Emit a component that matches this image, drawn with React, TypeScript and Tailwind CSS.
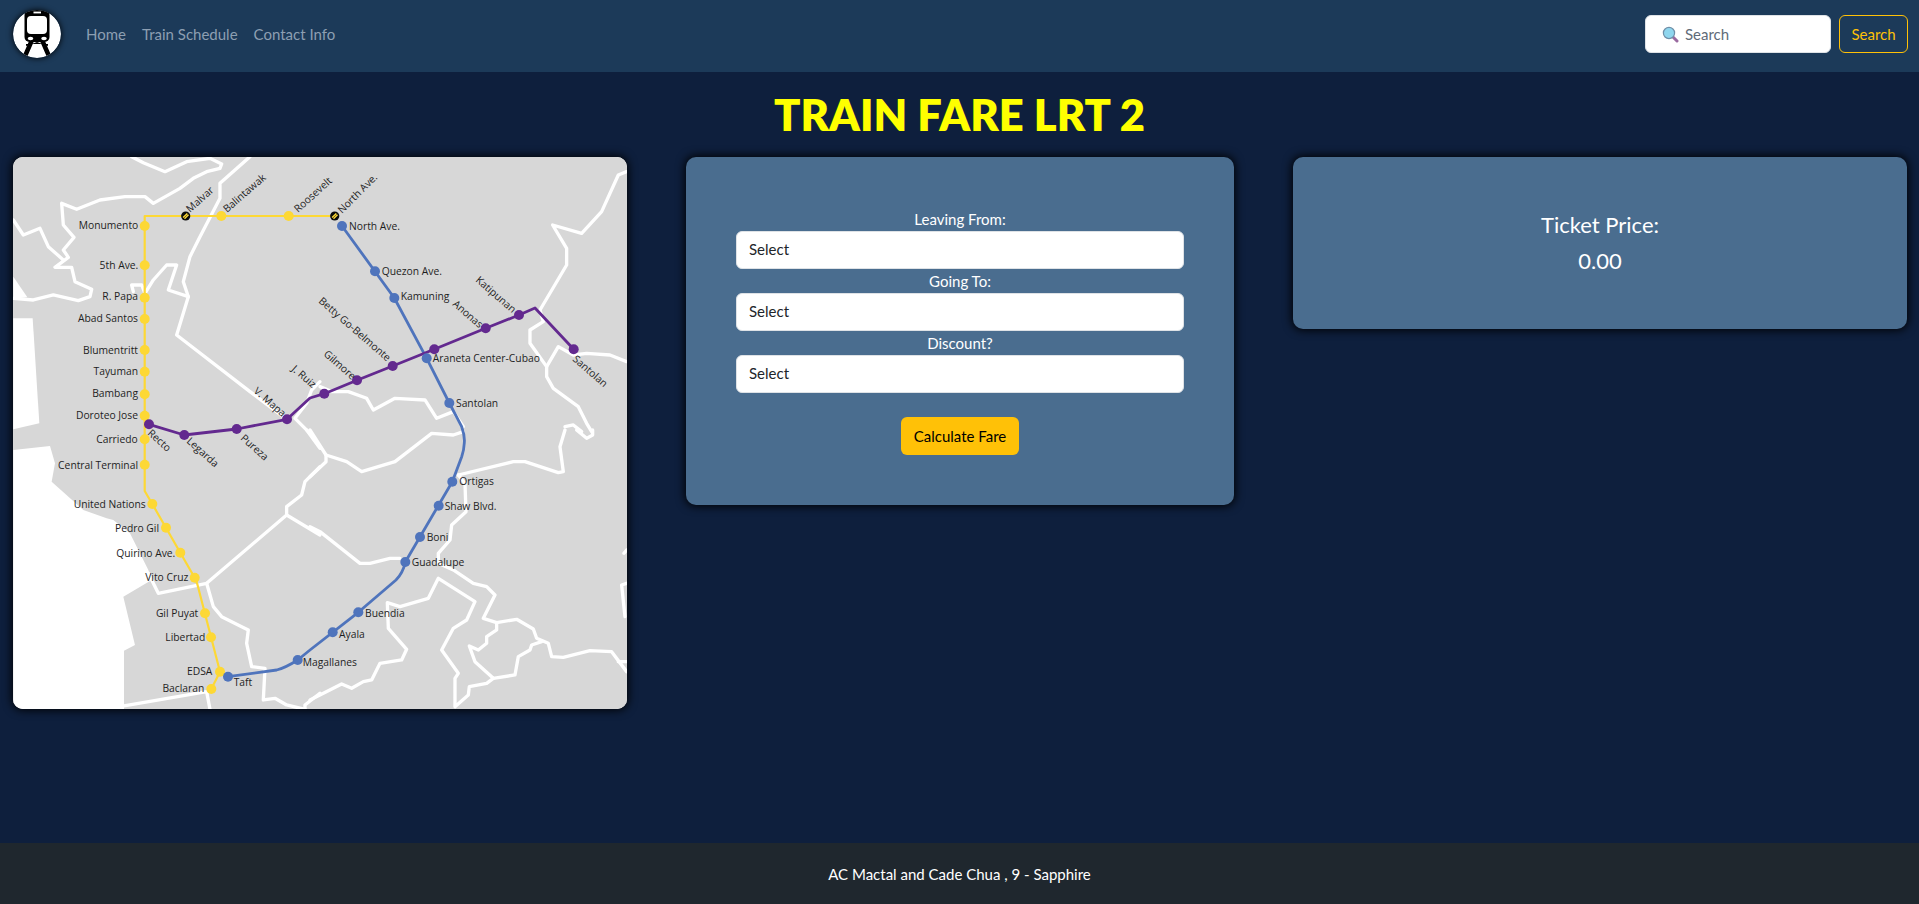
import React from "react";

const roadTiles: { x: number; y: number; fills?: string[]; roads: string[] }[] = [
  {
    x: 0,
    y: 150,
    fills: ["M40,380 L82,442 40,446 Z", "M40,505 L98,505 118,820 40,838 Z"],
    roads: [
      "M395,20 L430,38 495,65 560,35 630,25 665,42 660,55 620,65 580,85 540,115 460,160 435,140 375,140 300,150 230,178 185,160 190,225 222,262 190,300 205,322 165,352 215,352 225,395 275,418 270,440 235,452 160,435 100,450 40,445",
      "M40,210 L70,255 120,235 145,290 190,330",
      "M750,20 L660,100 660,145 600,260 570,320 550,395 565,440 530,555 750,725 860,808",
      "M565,440 L505,420 530,345 500,345 460,390 435,430 425,405 395,405 400,425",
      "M960,695 L935,720 920,760 885,805 930,850",
    ],
  },
  {
    x: 310,
    y: 150,
    roads: [
      "M950,65 L925,75 875,185 815,250 728,225 770,295 770,345 690,480 700,515 660,540 660,580 710,650 710,680 730,715 805,770 830,820 845,845",
      "M710,650 L745,590 790,615 830,610 900,615 950,635",
      "M30,710 L65,725 115,725 170,745 190,780 255,745 345,750 380,805 430,785 460,830",
      "M765,830 L790,825 815,845",
    ],
  },
  {
    x: 0,
    y: 430,
    fills: [
      "M40,60 L150,48 165,100 155,155 250,240 320,265 340,270 390,310 420,370 445,420 455,450 370,500 405,645 372,662 372,840 40,840 Z",
    ],
    roads: [
      "M920,0 L960,55",
      "M960,110 L915,155 905,195 860,230 860,255 620,460 475,490 445,430",
      "M860,255 L960,315",
      "M620,460 L640,530 665,560 725,590 745,600 740,640 755,710 795,715 790,810 825,805 860,825 915,838",
      "M372,828 L620,785 630,838",
      "M915,838 L915,825 960,790",
    ],
  },
  {
    x: 310,
    y: 430,
    roads: [
      "M0,0 L48,75 110,95 155,125 255,95 365,10 430,15 460,5",
      "M48,75 L48,95 0,140",
      "M445,135 L610,95 645,95 745,128 760,125 750,50 765,0",
      "M800,0 L830,25 848,15 848,0",
      "M445,135 L465,160 468,245 425,285 420,330 385,370 385,400 430,420 490,460 530,470 555,495 520,565 560,578 620,568 670,597 680,625 715,640 725,680 760,682 840,662 905,665 950,725",
      "M0,290 L30,305 150,400 180,400 240,385 270,385",
      "M560,578 L560,600 530,620 530,640 505,660 478,648 495,695 550,745 615,735 625,680 660,660 665,645 695,635",
      "M550,745 L530,760 478,770 475,795 435,830 435,745 445,730 395,660 430,595 470,570 495,515 385,445 355,505 270,530 232,518 235,595 290,658 275,690 210,700 185,750 160,755 125,775 95,762 0,810",
      "M950,360 L942,370",
      "M950,460 L935,465 945,560",
      "M925,695 L950,695",
    ],
  },
];

const yellowPath =
  "M144.7,465 L144.7,216 L334.7,216 M144.7,216 L144.7,491 L152.3,504 L194.7,577.7 L197.3,584 L220,671.7 L211.3,689";
const bluePath =
  "M342,226 L394.3,298 L426.7,358.3 L449.3,403 L461.7,426.7 Q465,436 464.3,443 Q464,450 461.7,456.7 L452.3,481.7 L405.3,562 Q403,573 396,580 L358.3,612.3 L310,650 L297.7,660 Q285,668 276.7,670 L228,676.7";
const purplePath =
  "M149,424.3 L184.3,435 L236.7,429 L287,419.3 L310,398 L324.3,393.7 L357,380.3 L392.7,366 L434.3,349.3 L485.7,328.3 L519,315 L535,308 L573.7,349.3";

const yellowStations: [number, number][] = [
  [144.7, 226], [144.7, 265.3], [144.7, 297.7], [144.7, 319], [144.7, 350], [144.7, 371.7], [144.7, 394.3], [144.7, 415.7],
  [144.7, 439.3], [144.7, 464.7], [152.3, 504], [166, 527.7], [180.3, 552.7], [194.7, 577.7], [205, 613.3], [211, 637.3],
  [220, 671.7], [211.3, 689], [221.3, 216], [288.7, 216],
];
const blueStations: [number, number][] = [
  [342, 226], [375, 271.3], [394.3, 298], [426.7, 358.3], [449.3, 403], [452.3, 481.7], [438.7, 505.7], [420, 537],
  [405.3, 562], [358.3, 612.3], [332.7, 632.3], [297.7, 660], [228, 676.7],
];
const purpleStations: [number, number][] = [
  [149, 424.3], [184.3, 435], [236.7, 429], [287, 419.3], [324.3, 393.7], [357, 380.3], [392.7, 366], [434.3, 349.3],
  [485.7, 328.3], [519, 315], [573.7, 349.3],
];

const endLabels: [string, number, number][] = [
  ["Monumento", 138.3, 225.5], ["5th Ave.", 138.3, 265], ["R. Papa", 138, 296.5], ["Abad Santos", 138, 318.3],
  ["Blumentritt", 138, 350], ["Tayuman", 138, 371.3], ["Bambang", 138, 393], ["Doroteo Jose", 138, 415],
  ["Carriedo", 137.7, 439.3], ["Central Terminal", 138, 465], ["United Nations", 145.7, 504], ["Pedro Gil", 159, 528],
  ["Quirino Ave.", 175.3, 553], ["Vito Cruz", 188.3, 577.3], ["Gil Puyat", 198.3, 613.3], ["Libertad", 205.3, 637.3],
  ["EDSA", 212.3, 671], ["Baclaran", 204.3, 688],
];
const startLabels: [string, number, number][] = [
  ["North Ave.", 349, 226], ["Quezon Ave.", 381.7, 271.3], ["Kamuning", 400.7, 296.7], ["Araneta Center-Cubao", 432.7, 358.3],
  ["Santolan", 456, 403], ["Ortigas", 459.3, 481.7], ["Shaw Blvd.", 444.7, 506], ["Boni", 426.7, 537.3],
  ["Guadalupe", 411.7, 562], ["Buendia", 365, 613.3], ["Ayala", 339, 634.3], ["Magallanes", 302.7, 662.7], ["Taft", 233.7, 682.3],
];
const rotatedLabels: [string, number, number, number][] = [
  ["Malvar", 190, 213, -42], ["Balintawak", 227, 213, -41], ["Roosevelt", 298, 213, -42], ["North Ave.", 342, 214, -45],
  ["Katipunan", 475, 281, 41], ["Anonas", 452, 305, 41], ["Betty Go-Belmonte", 318, 302, 41], ["Gilmore", 323, 355, 41],
  ["J. Ruiz", 291, 370, 41], ["V. Mapa", 253, 392, 41], ["Santolan", 572, 360, 41], ["Recto", 147, 434, 42],
  ["Legarda", 186, 442, 42], ["Pureza", 240, 439, 42],
];

function Marker({ x, y }: { x: number; y: number }) {
  return (
    <g transform={`translate(${x} ${y})`}>
      <circle r="4.6" fill="#0b0b0b" />
      <path d="M-2.6,1.6 L1.6,-2.6 M-1.2,2.8 L2.8,-1.2" stroke="#fdd835" strokeWidth="1.4" />
    </g>
  );
}

function MapSvg() {
  return (
    <svg viewBox="13 157 614 552" className="block w-full h-full font-['Open_Sans',sans-serif]">
      <rect x="13" y="157" width="614" height="552" fill="#d7d7d7" />
      {roadTiles.map((t, i) => (
        <g key={i} transform={`translate(${t.x} ${t.y}) scale(0.3333)`}>
          {t.fills?.map((d) => <path key={d} d={d} fill="#ffffff" />)}
          {t.roads.map((d) => (
            <path key={d} d={d} fill="none" stroke="#ffffff" strokeWidth="10" strokeLinejoin="round" strokeLinecap="round" />
          ))}
        </g>
      ))}
      <path d={yellowPath} fill="none" stroke="#fdd835" strokeWidth="2.2" strokeLinejoin="round" />
      <path d={bluePath} fill="none" stroke="#4f74bc" strokeWidth="2.8" strokeLinejoin="round" />
      <path d={purplePath} fill="none" stroke="#63298f" strokeWidth="2.8" strokeLinejoin="round" />
      {yellowStations.map(([x, y]) => <circle key={`${x}-${y}`} cx={x} cy={y} r="5" fill="#fdd835" />)}
      {blueStations.map(([x, y]) => <circle key={`${x}-${y}`} cx={x} cy={y} r="5" fill="#4f74bc" />)}
      {purpleStations.map(([x, y]) => <circle key={`${x}-${y}`} cx={x} cy={y} r="5" fill="#63298f" />)}
      <Marker x={185.7} y={216} />
      <Marker x={334.7} y={216} />
      <g fill="#1e1e1e" fontSize="10.3">
        {endLabels.map(([t, x, y]) => <text key={t} x={x} y={y + 3.6} textAnchor="end">{t}</text>)}
        {startLabels.map(([t, x, y]) => <text key={t} x={x} y={y + 3.6}>{t}</text>)}
        {rotatedLabels.map(([t, x, y, r]) => (
          <text key={`${t}${x}`} transform={`translate(${x} ${y}) rotate(${r})`}>{t}</text>
        ))}
      </g>
    </svg>
  );
}

function Logo() {
  return (
    <svg viewBox="0 0 48 48" className="w-12 h-12 rounded-full shadow-[0_0_6px_#000] shrink-0">
      <circle cx="24" cy="24" r="24" fill="#fff" />
      <path d="M19,30 L12.5,45 M29,30 L35.5,45" stroke="#000" strokeWidth="4.5" />
      <path d="M13,36 L24,32 L35,36 L35,34 L13,34 Z" fill="#000" />
      <rect x="11.5" y="0" width="25" height="32" rx="5" fill="#000" />
      <rect x="20.5" y="1.6" width="7.5" height="1.8" fill="#fff" />
      <rect x="14" y="6" width="20" height="18" rx="4" fill="#fff" />
      <ellipse cx="17.5" cy="28.5" rx="2.8" ry="1.8" fill="#fff" />
      <ellipse cx="31" cy="28.5" rx="2.8" ry="1.8" fill="#fff" />
    </svg>
  );
}

function SearchEmoji() {
  return (
    <svg viewBox="0 0 17 17" className="w-[17px] h-[17px] shrink-0">
      <path d="M10.5,10.5 L15,15" stroke="#9a6aa0" strokeWidth="3" strokeLinecap="round" />
      <circle cx="7" cy="7" r="5.6" fill="#8fd6ee" stroke="#6f8fa8" strokeWidth="1.2" />
    </svg>
  );
}

function Field({ label }: { label: string }) {
  return (
    <div className="flex flex-col">
      <label className="h-6 leading-6 text-center text-white">{label}</label>
      <select className="appearance-none h-[38px] w-full rounded-md border border-[#dee2e6] bg-white px-3 pb-[2px] text-[#212529] outline-none">
        <option>Select</option>
      </select>
    </div>
  );
}

export default function App() {
  return (
    <div className="min-h-screen flex flex-col bg-[#0e1f3d] font-['Lato',sans-serif] text-[15px]">
      <nav className="h-[72px] flex items-center bg-[#1c3a59] pl-[13px] pr-[11px] pb-1">
        <Logo />
        <ul className="flex ml-[25px] gap-[16px] text-[#8d9fb2]">
          <li>Home</li>
          <li>Train Schedule</li>
          <li>Contact Info</li>
        </ul>
        <div className="ml-auto flex gap-2">
          <div className="flex items-center gap-[6px] w-[186px] h-[38px] pl-4 bg-white rounded-md border border-[#dee2e6] text-[#5f6b78]">
            <SearchEmoji />
            <span>Search</span>
          </div>
          <button className="w-[69px] h-[38px] rounded-md border border-[#ffc107] text-[#ffc107]">Search</button>
        </div>
      </nav>

      <main className="flex-1">
        <h1 className="h-[85px] flex items-center justify-center text-[#ffff00] text-[43.5px] font-extrabold">TRAIN FARE LRT 2</h1>
        <div className="grid grid-cols-[614px_548px_614px] items-start gap-x-[59px] pl-[13px]">
          <div className="h-[552px] rounded-[10px] overflow-hidden shadow-[0_0_10px_1px_#000] bg-white">
            <MapSvg />
          </div>
          <div className="rounded-[10px] bg-[#4a6d8f] shadow-[0_0_10px_1px_#000] p-[50px]">
            <Field label="Leaving From:" />
            <Field label="Going To:" />
            <Field label="Discount?" />
            <div className="flex justify-center mt-6">
              <button className="w-[118px] h-[38px] rounded-md bg-[#ffc107] text-black">Calculate Fare</button>
            </div>
          </div>
          <div className="h-[172px] pb-[2px] rounded-[10px] bg-[#4a6d8f] shadow-[0_0_10px_1px_#000] flex flex-col items-center justify-center gap-[7px] text-white text-[22px]">
            <h4 className="leading-[29px]">Ticket Price:</h4>
            <h4 className="leading-[29px]">0.00</h4>
          </div>
        </div>
      </main>

      <footer className="h-[61px] pt-[2px] flex items-center justify-center bg-[#1f272e] text-white">
        AC Mactal and Cade Chua , 9 - Sapphire
      </footer>
    </div>
  );
}
